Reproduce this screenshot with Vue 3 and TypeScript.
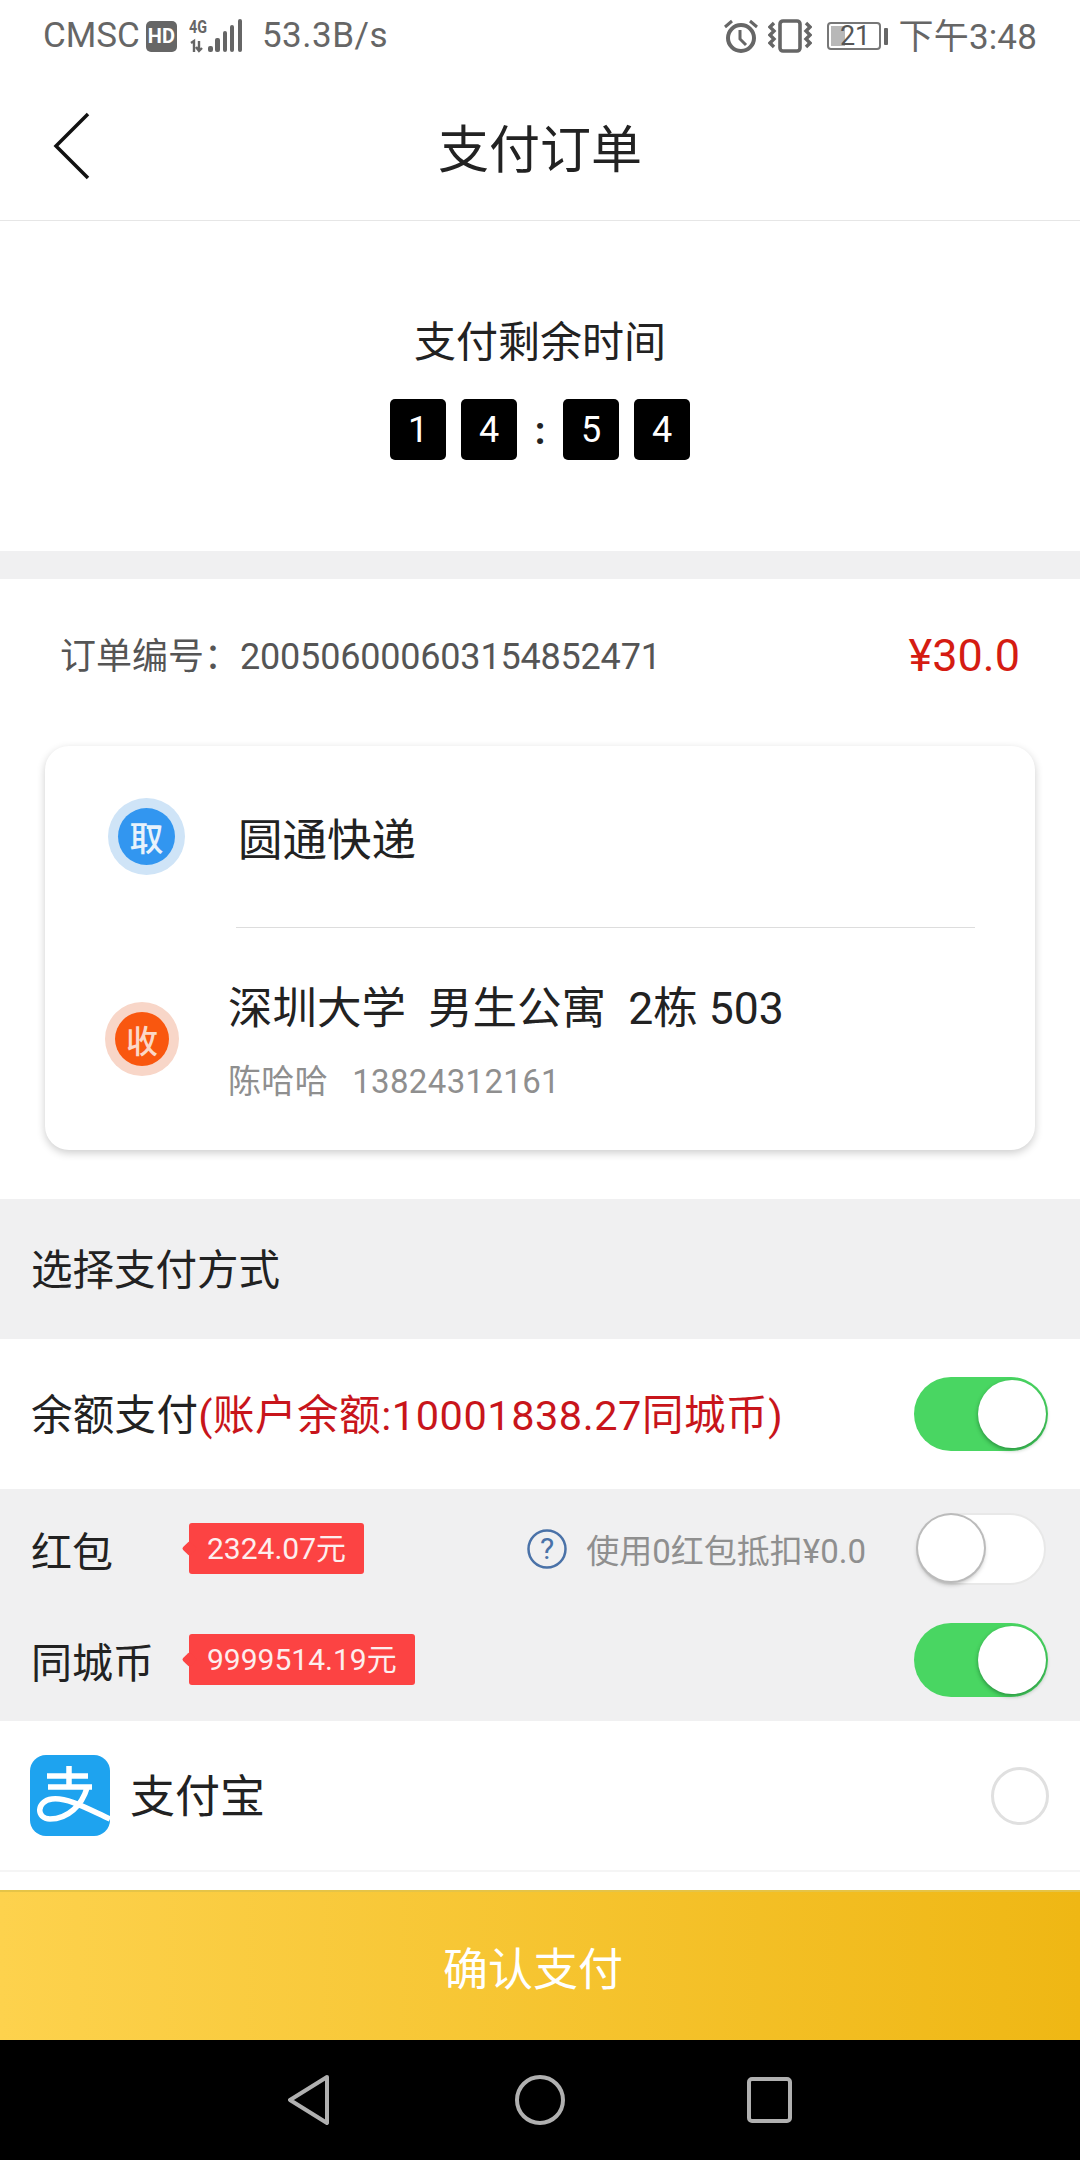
<script setup lang="ts">
const digits = ['1', '4', '5', '4']
</script>

<template>
  <div class="page">
    <div class="status-bar">
      <div class="status-left">
        <span class="carrier">CMSC</span>
        <span class="hd">HD</span>
        <svg class="signal" width="53" height="34" viewBox="0 0 53 34">
          <text x="0" y="14" class="net" textLength="18" lengthAdjust="spacingAndGlyphs">4G</text>
          <path d="M2 24l3-2v11M10 22v10M7 28l3 4 3-3" fill="none" stroke="#666" stroke-width="2.4" />
          <rect x="19" y="27" width="5" height="6" rx="2" fill="#666" />
          <rect x="26" y="19" width="5" height="14" rx="2" fill="#666" />
          <rect x="34" y="12" width="4" height="21" rx="2" fill="#666" />
          <rect x="41" y="6" width="4" height="27" rx="2" fill="#666" />
          <rect x="49" y="0" width="4" height="33" rx="2" fill="#666" />
        </svg>
        <span class="speed">53.3B/s</span>
      </div>
      <div class="status-right">
        <svg width="34" height="34" viewBox="0 0 34 34" fill="none" stroke="#666" stroke-width="4">
          <circle cx="17" cy="19" r="13" />
          <path d="M16 11v9l6 6" stroke-width="3" />
          <path d="M1 8l7-6M33 8l-7-6" stroke-width="3" />
        </svg>
        <svg class="vibrate" width="44" height="34" viewBox="0 0 44 34" fill="none" stroke="#666">
          <rect x="12" y="2" width="20" height="30" rx="3" stroke-width="3.6" />
          <path d="M6 4L2 8l4 4-4 4 4 4-4 4 4 4M38 4l4 4-4 4 4 4-4 4 4 4-4 4" stroke-width="3.4" />
        </svg>
        <div class="battery">
          <div class="battery-body">
            <span class="battery-fill"></span>
            <span class="battery-text">21</span>
          </div>
          <span class="battery-tip"></span>
        </div>
        <span class="clock">下午3:48</span>
      </div>
    </div>

    <header class="nav">
      <svg class="back" width="38" height="68" viewBox="0 0 38 68" fill="none" stroke="#111" stroke-width="3.5">
        <path d="M35 2L3 34l32 32" />
      </svg>
      <h1>支付订单</h1>
    </header>

    <section class="timer">
      <div class="timer-label">支付剩余时间</div>
      <div class="timer-boxes">
        <span class="digit">{{ digits[0] }}</span>
        <span class="digit">{{ digits[1] }}</span>
        <span class="colon">:</span>
        <span class="digit">{{ digits[2] }}</span>
        <span class="digit">{{ digits[3] }}</span>
      </div>
    </section>

    <section class="order">
      <div class="order-head">
        <span class="order-no">订单编号：<span class="order-num">200506000603154852471</span></span>
        <span class="price">¥30.0</span>
      </div>
      <div class="card">
        <div class="card-top">
          <span class="badge badge-blue">取</span>
          <span class="company">圆通快递</span>
        </div>
        <div class="divider"></div>
        <div class="card-bottom">
          <span class="badge badge-orange">收</span>
          <div class="address">
            <div class="addr-line">深圳大学&nbsp;&nbsp;男生公寓&nbsp;&nbsp;2栋 503</div>
            <div class="addr-sub">陈哈哈&nbsp;&nbsp;&nbsp;13824312161</div>
          </div>
        </div>
      </div>
    </section>

    <div class="pay-title">选择支付方式</div>

    <div class="row balance">
      <span class="label">余额支付<span class="red">(账户余额:10001838.27同城币)</span></span>
      <span class="switch on"><i></i></span>
    </div>

    <div class="sub-rows">
      <div class="sub-row">
        <span class="sub-label">红包</span>
        <span class="tag">2324.07元</span>
        <div class="hint">
          <svg width="40" height="40" viewBox="0 0 40 40">
            <circle cx="20" cy="20" r="18.500" fill="none" stroke="#4a72a8" stroke-width="2.500" />
            <text x="20" y="30" text-anchor="middle" class="q">?</text>
          </svg>
          <span>使用0红包抵扣¥0.0</span>
        </div>
        <span class="switch off"><i></i></span>
      </div>
      <div class="sub-row">
        <span class="sub-label">同城币</span>
        <span class="tag">9999514.19元</span>
        <span class="switch on push"><i></i></span>
      </div>
    </div>

    <div class="row alipay">
      <svg class="ali-logo" width="80" height="81" viewBox="0 0 80 81">
        <rect width="80" height="81" rx="16" fill="#1ea3ef" />
        <path
          d="M17 21H58M39 11V32M18 32H62M57 33C52 50 38 64 20 64C6 64 6 46 22 44C38 42 60 55 80 64"
          fill="none"
          stroke="#fff"
          stroke-width="5.500"
        />
      </svg>
      <span class="ali-name">支付宝</span>
      <span class="radio"></span>
    </div>

    <div class="spacer"></div>
    <button class="confirm">确认支付</button>

    <div class="android-nav">
      <svg width="41" height="50" viewBox="0 0 41 50" fill="none" stroke="#b0b0b0" stroke-width="4" stroke-linejoin="round">
        <path d="M39 2L2 25l37 23z" />
      </svg>
      <svg width="50" height="50" viewBox="0 0 50 50" fill="none" stroke="#b0b0b0" stroke-width="4">
        <circle cx="25" cy="25" r="23" />
      </svg>
      <svg width="45" height="46" viewBox="0 0 45 46" fill="none" stroke="#b0b0b0" stroke-width="4" stroke-linejoin="round">
        <rect x="2" y="2" width="41" height="42" rx="3" />
      </svg>
    </div>
  </div>
</template>

<style scoped>
  .page {
    width: 1080px;
    height: 2160px;
    display: flex;
    flex-direction: column;
    background: #fff;
    color: #222;
    font-family: Roboto, 'Noto Sans CJK SC', sans-serif;
    overflow: hidden;
  }

  .status-bar {
    height: 72px;
    flex: none;
    display: flex;
    justify-content: space-between;
    align-items: flex-start;
    padding: 15px 43px 0 43px;
    box-sizing: border-box;
    color: #666;
    font-size: 35px;
    line-height: 42px;
  }

  .status-left,
  .status-right {
    display: flex;
    align-items: center;
    height: 42px;
  }

  .hd {
    width: 31px;
    height: 31px;
    margin-left: 6px;
    border-radius: 5px;
    background: #666;
    color: #fff;
    font-size: 20px;
    font-weight: 700;
    line-height: 31px;
    display: flex;
    align-items: center;
    justify-content: center;
  }

  .signal {
    margin-left: 12px;
  }

  .net {
    font-size: 18px;
    font-weight: 700;
    fill: #666;
  }

  .speed {
    margin-left: 20px;
    letter-spacing: 0.5px;
  }

  .vibrate {
    margin-left: 10px;
  }

  .battery {
    margin-left: 15px;
    display: flex;
    align-items: center;
    gap: 3px;
  }

  .battery-body {
    position: relative;
    width: 54px;
    height: 28px;
    box-sizing: border-box;
    border: 2px solid #777;
    border-radius: 4px;
    display: flex;
    align-items: center;
    justify-content: center;
  }

  .battery-fill {
    position: absolute;
    left: 2px;
    top: 2px;
    bottom: 2px;
    width: 14px;
    background: #b8b8b8;
  }

  .battery-text {
    position: relative;
    margin-left: 3px;
    font-size: 27px;
    line-height: 24px;
    color: #555;
  }

  .battery-tip {
    width: 4px;
    height: 17px;
    background: #666;
    border-radius: 1px;
  }

  .clock {
    margin-left: 11px;
    margin-top: 4px;
    letter-spacing: 0.15px;
  }

  .nav {
    height: 149px;
    flex: none;
    position: relative;
    display: flex;
    align-items: center;
    justify-content: center;
    border-bottom: 1px solid #e6e6e6;
    box-sizing: border-box;
  }

  .back {
    position: absolute;
    left: 53px;
    top: 40px;
  }

  h1 {
    margin: 0;
    font-size: 51px;
    font-weight: 400;
    color: #222;
  }

  .timer {
    height: 330px;
    flex: none;
    display: flex;
    flex-direction: column;
    align-items: center;
    border-bottom: 28px solid #f0f0f1;
    box-sizing: content-box;
  }

  .timer-label {
    margin-top: 92px;
    font-size: 42px;
    line-height: 60px;
  }

  .timer-boxes {
    margin-top: 26px;
    display: flex;
    align-items: center;
    gap: 15px;
  }

  .digit {
    width: 56px;
    height: 61px;
    border-radius: 5px;
    background: #000;
    color: #fff;
    font-size: 36px;
    display: flex;
    align-items: center;
    justify-content: center;
  }

  .colon {
    width: 16px;
    padding-top: 3px;
    text-align: center;
    font-size: 38px;
    font-weight: 700;
    line-height: 58px;
    color: #222;
  }

  .order {
    flex: none;
    height: 620px;
    box-sizing: border-box;
    padding: 0 45px;
  }

  .order-head {
    height: 167px;
    box-sizing: border-box;
    display: flex;
    align-items: center;
    justify-content: space-between;
    padding: 0 15px 20px;
  }

  .order-no {
    font-size: 36px;
    color: #555;
  }

  .order-num {
    letter-spacing: -0.2px;
  }

  .price {
    margin-top: 6px;
    font-size: 45px;
    color: #d51c12;
  }

  .card {
    height: 404px;
    border-radius: 24px;
    background: #fff;
    box-shadow: 0 3px 8px rgba(0, 0, 0, 0.2);
    display: flex;
    flex-direction: column;
  }

  .card-top {
    height: 181px;
    flex: none;
    display: flex;
    align-items: center;
    padding-left: 64px;
  }

  .badge {
    width: 57px;
    height: 57px;
    flex: none;
    border-radius: 50%;
    display: flex;
    align-items: center;
    justify-content: center;
    color: #e8f2fb;
    font-size: 34px;
    font-weight: 500;
    font-family: 'Noto Sans CJK SC', sans-serif;
  }

  .badge-blue {
    margin-left: 9px;
    background: #3296f0;
    box-shadow: 0 0 0 10px #cfe4f7;
  }

  .badge-orange {
    margin-left: 6px;
    width: 54px;
    height: 54px;
    background: #f9570f;
    color: #fbd8c8;
    font-size: 32px;
    box-shadow: 0 0 0 10px #f8d6c8;
  }

  .company {
    margin-left: 63px;
    font-size: 44.500px;
    color: #222;
  }

  .divider {
    height: 1px;
    flex: none;
    margin: 0 60px 0 191px;
    background: #ddd;
  }

  .card-bottom {
    flex: 1;
    display: flex;
    align-items: center;
    padding-left: 64px;
  }

  .address {
    margin-left: 59px;
    margin-top: 5px;
  }

  .addr-line {
    font-size: 44.500px;
    line-height: 60px;
    color: #222;
  }

  .addr-sub {
    margin-top: 20px;
    font-size: 33px;
    line-height: 46px;
    letter-spacing: 0.35px;
    word-spacing: -0.5px;
    color: #8f8f8f;
  }

  .pay-title {
    height: 140px;
    flex: none;
    box-sizing: border-box;
    display: flex;
    align-items: center;
    padding: 0 0 4px 31px;
    background: #f0f0f1;
    font-size: 41.500px;
    color: #222;
  }

  .row {
    flex: none;
    display: flex;
    align-items: center;
    background: #fff;
  }

  .balance {
    height: 150px;
    justify-content: space-between;
    padding: 0 32px 0 31px;
  }

  .label {
    margin-top: -5px;
    font-size: 41.500px;
    letter-spacing: 0.3px;
    color: #222;
  }

  .red {
    letter-spacing: 0.55px;
    color: #c8151b;
  }

  .switch {
    position: relative;
    width: 134px;
    height: 74px;
    flex: none;
    border-radius: 37px;
    box-sizing: border-box;
  }

  .switch i {
    position: absolute;
    top: 3px;
    width: 68px;
    height: 68px;
    border-radius: 50%;
    background: #fff;
  }

  .switch.on {
    background: #49d662;
  }

  .switch.on i {
    right: 2px;
    box-shadow: 0 2px 4px rgba(0, 60, 20, 0.45);
  }

  .switch.off {
    width: 130px;
    height: 72px;
    margin-right: 2px;
    margin-top: -1px;
    background: #fff;
    border: 2px solid #e8e8e8;
  }

  .switch.off i {
    left: 0;
    top: 0;
    width: 66px;
    height: 66px;
    box-shadow: 0 0 0 2px #bbb, 0 3px 5px rgba(0, 0, 0, 0.3);
  }

  .sub-rows {
    height: 232px;
    flex: none;
    box-sizing: border-box;
    background: #f0f0f1;
    display: flex;
    flex-direction: column;
    padding: 24px 32px 24px 31px;
    gap: 39px;
  }

  .sub-row {
    height: 72px;
    display: flex;
    align-items: center;
  }

  .sub-label {
    width: 158px;
    flex: none;
    font-size: 41px;
    color: #222;
  }

  .tag {
    position: relative;
    height: 51px;
    margin-top: -2px;
    line-height: 51px;
    padding: 0 18px;
    border-radius: 3px;
    background: #fc4343;
    color: #fdeeee;
    font-size: 30px;
  }

  .tag::before {
    content: '';
    position: absolute;
    left: -5px;
    top: 20px;
    width: 11px;
    height: 11px;
    background: #fc4343;
    border-radius: 2px;
    transform: rotate(45deg);
  }

  .hint {
    margin-left: auto;
    margin-right: 50px;
    display: flex;
    align-items: center;
    gap: 19px;
    font-size: 33px;
    color: #8f8f8f;
  }

  .q {
    font-size: 30px;
    fill: #4a72a8;
  }

  .push {
    margin-left: auto;
  }

  .alipay {
    height: 149px;
    padding: 0 31px 0 30px;
    border-bottom: 2px solid #f5f5f5;
  }

  .ali-logo {
    flex: none;
  }

  .ali-name {
    margin-left: 20px;
    margin-top: -5px;
    font-size: 45px;
    color: #222;
  }

  .radio {
    width: 58px;
    height: 58px;
    margin-left: auto;
    box-sizing: border-box;
    border: 3px solid #e0e0e0;
    border-radius: 50%;
  }

  .spacer {
    flex: 1;
  }

  .confirm {
    height: 150px;
    flex: none;
    padding: 0 14px 0 0;
    border: none;
    border-top: 2px solid #e5c447;
    background: linear-gradient(90deg, #fdd24d, #efb714);
    color: #fff;
    font-size: 45px;
    font-family: inherit;
  }

  .android-nav {
    height: 120px;
    flex: none;
    position: relative;
    background: #000;
    display: flex;
    align-items: center;
    padding-left: 288px;
  }

  .android-nav svg:nth-child(2) {
    margin-left: 186px;
  }

  .android-nav svg:nth-child(3) {
    margin-left: 182px;
  }
</style>
